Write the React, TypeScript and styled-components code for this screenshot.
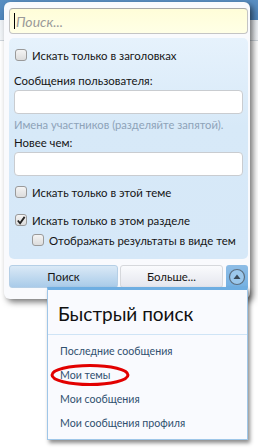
import React from "react";
import styled, { createGlobalStyle } from "styled-components";

const Global = createGlobalStyle`
  html, body { margin: 0; padding: 0; background: #fff; }
  body { font-family: Lato, "Liberation Sans", sans-serif; }
  * { box-sizing: border-box; }
`;

const Page = styled.div`
  position: relative;
  width: 258px;
  height: 448px;
  overflow: hidden;
  padding: 2px 0 0 4px;
  background: linear-gradient(
    to bottom,
    #5a8fc2 0px,
    #4f86bd 20px,
    #eef2f6 20px,
    #f2f5f8 40px,
    #cfd6dd 40px,
    #cfd6dd 41px,
    #ffffff 41px
  );
`;

const Panel = styled.div`
  width: 246px;
  background: #f9fafd;
  border-radius: 6px;
  box-shadow: 3px 3px 6px rgba(0, 0, 0, 0.55);
  padding: 6px 2px 10px 5px;
`;

const SearchBox = styled.div`
  height: 26px;
  border: 1px solid #c4c4c4;
  border-top-color: #a8a8a8;
  border-radius: 4px;
  background: linear-gradient(to bottom, #fffdd8, #ffffe6);
  display: flex;
  align-items: center;
  padding-left: 4px;
`;

const Caret = styled.span`
  width: 1px;
  height: 16px;
  background: #000;
  margin-right: 1px;
`;

const Placeholder = styled.span`
  font-style: italic;
  font-size: 14px;
  color: #9a9a9a;
`;

const Options = styled.div`
  margin-top: 4px;
  border-radius: 5px;
  background: linear-gradient(to bottom, #e6f2fc, #d7e9f8 40%, #d6e8f8);
  padding: 10px 5px 12px 5px;
  display: flex;
  flex-direction: column;
  white-space: nowrap;
`;

const CheckRow = styled.label<{ $indent?: boolean; $mt?: number }>`
  display: flex;
  align-items: center;
  gap: 5px;
  margin-left: ${(p) => (p.$indent ? 18 : 1)}px;
  margin-top: ${(p) => p.$mt ?? 0}px;
  height: 14px;
  font-size: 11.4px;
  color: #151515;
`;

const Box = styled.span`
  width: 12px;
  height: 12px;
  border: 1px solid #9a9a9a;
  border-radius: 3px;
  background: linear-gradient(to bottom, #f4f4f4, #dcdcdc);
  display: flex;
  align-items: center;
  justify-content: center;
`;

const Label = styled.div<{ $mt: number }>`
  margin-top: ${(p) => p.$mt}px;
  font-size: 11.4px;
  color: #151515;
  line-height: 14px;
`;

const Hint = styled.div`
  margin-top: 4px;
  font-size: 11.2px;
  line-height: 14px;
  color: #8ea3b8;
`;

const TextInput = styled.div`
  margin-top: 2px;
  height: 24px;
  border: 1px solid #c9ccd0;
  border-radius: 4px;
  background: #fff;
`;

const Buttons = styled.div`
  display: flex;
  margin-top: 6px;
  height: 24px;
`;

const Btn = styled.div<{ $primary?: boolean; $w: number }>`
  width: ${(p) => p.$w}px;
  height: 23px;
  margin-right: 2px;
  border: 1px solid ${(p) => (p.$primary ? "#b5cfe6" : "#d6d8dc")};
  border-radius: 3px;
  background: ${(p) =>
    p.$primary
      ? "linear-gradient(to bottom, #dae9f6, #a9cbe9)"
      : "linear-gradient(to bottom, #fafbfd, #e4e6ee)"};
  display: flex;
  align-items: center;
  justify-content: center;
  font-size: 11.4px;
  color: #151515;
`;

const Tab = styled.div`
  width: 22px;
  height: 28px;
  margin-left: 1px;
  background: linear-gradient(to bottom, #8ebde6, #6eaee2);
  border-radius: 3px 3px 0 0;
  display: flex;
  justify-content: center;
  padding-top: 3px;
`;

const Menu = styled.div`
  position: absolute;
  left: 47px;
  top: 287px;
  width: 201px;
  height: 153px;
  background: #f9fafe;
  border: 1px solid #9fc6e8;
  border-top: 3px solid #6eaee2;
  box-shadow: 2px 3px 4px rgba(0, 0, 0, 0.45);
`;

const MenuTitle = styled.div`
  font-size: 19px;
  color: #101010;
  padding: 13px 0 0 10px;
  height: 45px;
  border-bottom: 1px solid #cfe4f6;
  line-height: 22px;
`;

const MenuList = styled.div`
  display: flex;
  flex-direction: column;
  padding: 9px 0 0 12px;
  gap: 10px;
`;

const MenuItem = styled.div`
  position: relative;
  font-size: 10.6px;
  line-height: 14px;
  color: #30506f;
`;

const Circle = styled.svg`
  position: absolute;
  left: -10px;
  top: -5px;
`;

const Check = ({ on }: { on?: boolean }) => (
  <Box>
    {on && (
      <svg width="11" height="11" viewBox="0 0 11 11">
        <path d="M2 5.5 L4.5 8.5 L9.5 1.5" stroke="#222" strokeWidth="2" fill="none" />
      </svg>
    )}
  </Box>
);

export default function App() {
  return (
    <Page>
      <Global />
      <Panel>
        <SearchBox>
          <Caret />
          <Placeholder>Поиск...</Placeholder>
        </SearchBox>
        <Options>
          <CheckRow>
            <Check />
            Искать только в заголовках
          </CheckRow>
          <Label $mt={12}>Сообщения пользователя:</Label>
          <TextInput />
          <Hint>Имена участников (разделяйте запятой).</Hint>
          <Label $mt={4}>Новее чем:</Label>
          <TextInput />
          <CheckRow $mt={9}>
            <Check />
            Искать только в этой теме
          </CheckRow>
          <CheckRow $mt={14}>
            <Check on />
            Искать только в этом разделе
          </CheckRow>
          <CheckRow $indent $mt={6}>
            <Check />
            Отображать результаты в виде тем
          </CheckRow>
        </Options>
        <Buttons>
          <Btn $primary $w={109}>Поиск</Btn>
          <Btn $w={103}>Больше...</Btn>
          <Tab>
            <svg width="18" height="18" viewBox="0 0 18 18">
              <circle cx="9" cy="9" r="7.5" fill="#9cc8ec" stroke="#5d6f80" strokeWidth="1.2" />
              <path d="M5.5 11 L9 6.5 L12.5 11 Z" fill="#3a4a58" />
            </svg>
          </Tab>
        </Buttons>
      </Panel>
      <Menu>
        <MenuTitle>Быстрый поиск</MenuTitle>
        <MenuList>
          <MenuItem>Последние сообщения</MenuItem>
          <MenuItem>
            <Circle width="80" height="24" viewBox="0 0 80 24">
              <ellipse cx="40" cy="12" rx="38" ry="9.5" fill="none" stroke="#e20000" strokeWidth="3" />
            </Circle>
            Мои темы
          </MenuItem>
          <MenuItem>Мои сообщения</MenuItem>
          <MenuItem>Мои сообщения профиля</MenuItem>
        </MenuList>
      </Menu>
    </Page>
  );
}
